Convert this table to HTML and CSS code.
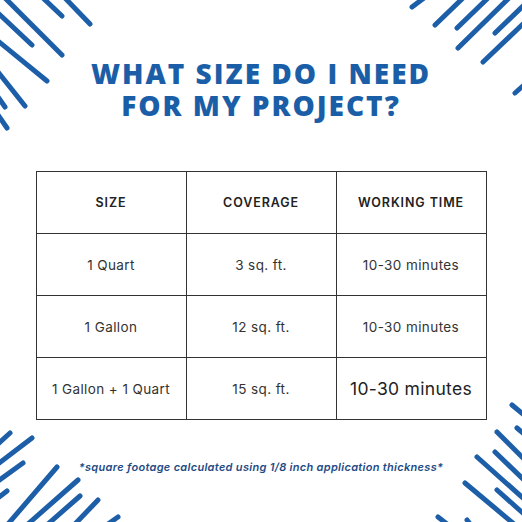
FILE: index.html
```html
<!DOCTYPE html>
<html lang="en">
<head>
    <meta charset="UTF-8">
    <title>What size do I need</title>
    <link rel="stylesheet" href="styles.css">
</head>
<body>
    <div class="card">
        <svg class="stripes" viewBox="0 0 522 522" width="522" height="522">
            <g stroke="#1c5ea7" stroke-width="5" stroke-linecap="round">
                <!-- top left -->
                <line x1="43" y1="-2" x2="62" y2="16"/>
                <line x1="65" y1="-2" x2="90" y2="24"/>
                <line x1="5" y1="-2" x2="62" y2="55"/>
                <line x1="-2" y1="13" x2="32" y2="45"/>
                <line x1="-2" y1="41" x2="47" y2="81"/>
                <line x1="-2" y1="72" x2="25" y2="106"/>
                <line x1="-2" y1="97" x2="5" y2="107"/>
                <line x1="-2" y1="115" x2="7" y2="128"/>
                <!-- top right -->
                <line x1="412" y1="7" x2="424" y2="-2"/>
                <line x1="435" y1="25" x2="463" y2="-2"/>
                <line x1="457" y1="28" x2="488" y2="-2"/>
                <line x1="458" y1="48" x2="509" y2="-2"/>
                <line x1="495" y1="33" x2="524" y2="5"/>
                <line x1="483" y1="62" x2="524" y2="23"/>
                <line x1="515" y1="93" x2="524" y2="85"/>
                <!-- bottom left -->
                <line x1="-2" y1="444" x2="10" y2="433"/>
                <line x1="-2" y1="464" x2="32" y2="438"/>
                <line x1="-2" y1="481" x2="23" y2="463"/>
                <line x1="-2" y1="498" x2="7" y2="491"/>
                <line x1="8" y1="524" x2="57" y2="467"/>
                <line x1="28" y1="524" x2="78" y2="480"/>
                <line x1="48" y1="524" x2="80" y2="496"/>
                <line x1="75" y1="524" x2="98" y2="500"/>
                <line x1="108" y1="524" x2="118" y2="517"/>
                <!-- bottom right -->
                <line x1="512" y1="405" x2="524" y2="415"/>
                <line x1="517" y1="428" x2="524" y2="434"/>
                <line x1="497" y1="432" x2="524" y2="459"/>
                <line x1="495" y1="452" x2="524" y2="480"/>
                <line x1="477" y1="457" x2="524" y2="499"/>
                <line x1="497" y1="490" x2="524" y2="514"/>
                <line x1="465" y1="483" x2="514" y2="524"/>
                <line x1="438" y1="517" x2="447" y2="524"/>
                <line x1="467" y1="520" x2="470" y2="524"/>
            </g>
        </svg>

        <h1 class="title">
            <span class="line">WHAT SIZE DO I NEED</span>
            <span class="line">FOR MY PROJECT?</span>
        </h1>

        <table class="sizes">
            <tr>
                <th>SIZE</th>
                <th>COVERAGE</th>
                <th>WORKING TIME</th>
            </tr>
            <tr>
                <td>1 Quart</td>
                <td>3 sq. ft.</td>
                <td>10-30 minutes</td>
            </tr>
            <tr>
                <td>1 Gallon</td>
                <td>12 sq. ft.</td>
                <td>10-30 minutes</td>
            </tr>
            <tr>
                <td>1 Gallon + 1 Quart</td>
                <td>15 sq. ft.</td>
                <td class="big">10-30 minutes</td>
            </tr>
        </table>

        <p class="note">*square footage calculated using 1/8 inch application thickness*</p>
    </div>
</body>
</html>
```

FILE: styles.css
```css
body {
    margin: 0;
    padding: 0;
    background: #fff;
    font-family: 'Open Sans', sans-serif;
}

.card {
    position: relative;
    width: 522px;
    height: 522px;
    overflow: hidden;
    background: #fff;
}

.stripes {
    position: absolute;
    top: 0;
    left: 0;
}

.title {
    position: relative;
    margin: 0;
    padding-top: 57px;
    text-align: center;
    color: #1b5ea8;
    font-family: 'Open Sans', sans-serif;
    font-weight: 800;
    font-size: 28px;
    letter-spacing: 2px;
}

.title .line {
    display: block;
    height: 32px;
    line-height: 32px;
}

.sizes {
    position: relative;
    margin: 50px auto 0;
    width: 451px;
    border-collapse: collapse;
    table-layout: fixed;
}

.sizes th,
.sizes td {
    border: 1.5px solid #333;
    height: 61px;
    padding: 0;
    text-align: center;
    color: #222;
}

.sizes th {
    font-family: 'Inter', sans-serif;
    font-weight: 600;
    font-size: 12.5px;
    letter-spacing: 0.9px;
}

.sizes td {
    font-family: 'Inter', sans-serif;
    font-size: 13.5px;
    font-weight: 400;
    letter-spacing: 0.4px;
    color: #333;
}

.sizes td.big {
    font-size: 17.5px;
    letter-spacing: 0.3px;
    color: #222;
}

.note {
    position: relative;
    margin: 40px 0 0;
    text-align: center;
    font-family: 'Inter', sans-serif;
    font-style: italic;
    font-weight: 600;
    font-size: 11px;
    color: #1e4b84;
    letter-spacing: 0.3px;
}
```
